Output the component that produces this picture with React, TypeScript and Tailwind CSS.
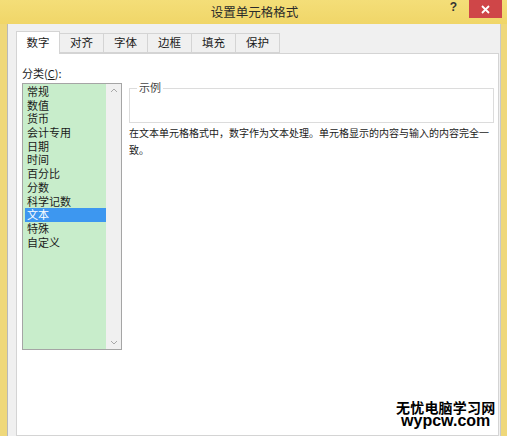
import React from 'react';

const categories = ['常规', '数值', '货币', '会计专用', '日期', '时间', '百分比', '分数', '科学记数', '文本', '特殊', '自定义'];
const tabs = ['数字', '对齐', '字体', '边框', '填充', '保护'];

const font = { fontFamily: '"Noto Sans CJK SC", "Liberation Sans", sans-serif' };

export default function App() {
  return (
    <div
      className="relative w-[507px] h-[436px] overflow-hidden bg-[#f1d86c] flex flex-col text-[#1a1a1a]"
      style={font}
    >
      {/* 标题栏 */}
      <div className="h-[24px] shrink-0 flex items-center justify-center bg-gradient-to-b from-[#f4de78] to-[#f0d668]">
        <span className="text-[12.5px] leading-none text-[#2b2b2b] pl-[2px]">设置单元格格式</span>
      </div>
      <div className="absolute top-0 right-[5px] flex items-start">
        <span className="mr-[12px] mt-[1px] text-[12px] leading-none font-bold text-[#333]" style={{ fontFamily: '"Liberation Sans", sans-serif' }}>?</span>
        <div className="w-[33px] h-[18px] bg-[#cf4648] flex items-center justify-center">
          <svg width="9" height="9" viewBox="0 0 9 9">
            <path d="M1 1 L8 8 M8 1 L1 8" stroke="#fff" strokeWidth="1.8" />
          </svg>
        </div>
      </div>

      {/* 主体 */}
      <div className="flex-1 flex min-h-0">
        <div className="w-[8px] shrink-0 border-r border-[#b9b9b9] bg-[#efd87a]" />
        <div className="flex-1 bg-[#f0f0f0] pl-[8px] pr-[1px] pt-[7px] flex flex-col min-w-0">
          {/* 选项卡 */}
          <div className="flex items-end h-[23px] shrink-0 relative z-10">
            {tabs.map((t, i) =>
              i === 0 ? (
                <div
                  key={t}
                  className="w-[44px] h-[23px] bg-white border border-b-0 border-[#d4d4d4] flex items-center justify-center text-[11.5px] leading-none"
                >
                  {t}
                </div>
              ) : (
                <div
                  key={t}
                  className="w-[44px] h-[20px] mb-px bg-[#f0f0f0] border border-l-0 border-[#d4d4d4] flex items-center justify-center text-[11.5px] leading-none"
                >
                  {t}
                </div>
              )
            )}
          </div>
          {/* 面板 */}
          <div className="flex-1 -mt-px bg-white border border-[#d4d4d4] flex pl-[5px] pt-[14px]">
            <div className="w-[100px] shrink-0 flex flex-col">
              <div className="text-[11px] leading-none h-[15px]">
                分类(<span className="underline">C</span>):
              </div>
              <div className="h-[267px] border border-[#a5a5a5] flex">
                <div className="flex-1 bg-[#c8edcb] pt-[1px] pl-[2px]">
                  {categories.map((c) =>
                    c === '文本' ? (
                      <div key={c} className="h-[13.7px] leading-[13.7px] text-[11px] bg-[#3d97f0] text-white pl-[2px]">
                        {c}
                      </div>
                    ) : (
                      <div key={c} className="h-[13.7px] leading-[13.7px] text-[11px] pl-[2px]">
                        {c}
                      </div>
                    )
                  )}
                </div>
                <div className="w-[15px] bg-[#f0f0f0] flex flex-col items-center justify-between py-[4px]">
                  <svg width="8" height="5" viewBox="0 0 8 5">
                    <path d="M1 4 L4 1 L7 4" stroke="#a8a8a8" strokeWidth="1" fill="none" />
                  </svg>
                  <svg width="8" height="5" viewBox="0 0 8 5">
                    <path d="M1 1 L4 4 L7 1" stroke="#a8a8a8" strokeWidth="1" fill="none" />
                  </svg>
                </div>
              </div>
            </div>
            <div className="flex-1 pl-[7px] pr-[4px] pt-[20px]">
              <div className="h-[35px] border border-[#dcdcdc] relative">
                <span className="absolute -top-[7px] left-[7px] bg-white px-[2px] text-[11px] leading-none text-[#444]">示例</span>
              </div>
              <p className="mt-[1px] text-[10px] leading-[17px]">
                在文本单元格格式中，数字作为文本处理。单元格显示的内容与输入的内容完全一致。
              </p>
            </div>
          </div>
        </div>
        <div className="w-[7px] shrink-0 border-l border-[#c8c8c8] bg-[#efd87a]" />
      </div>

      {/* 水印 */}
      <div className="absolute left-[396px] top-[400px] flex flex-col items-center leading-none text-black">
        <span className="text-[14px] font-bold tracking-[0.2px]">无忧电脑学习网</span>
        <span className="text-[16px] font-bold leading-[14px]" style={{ fontFamily: '"Liberation Sans", sans-serif' }}>wypcw.com</span>
      </div>
    </div>
  );
}
